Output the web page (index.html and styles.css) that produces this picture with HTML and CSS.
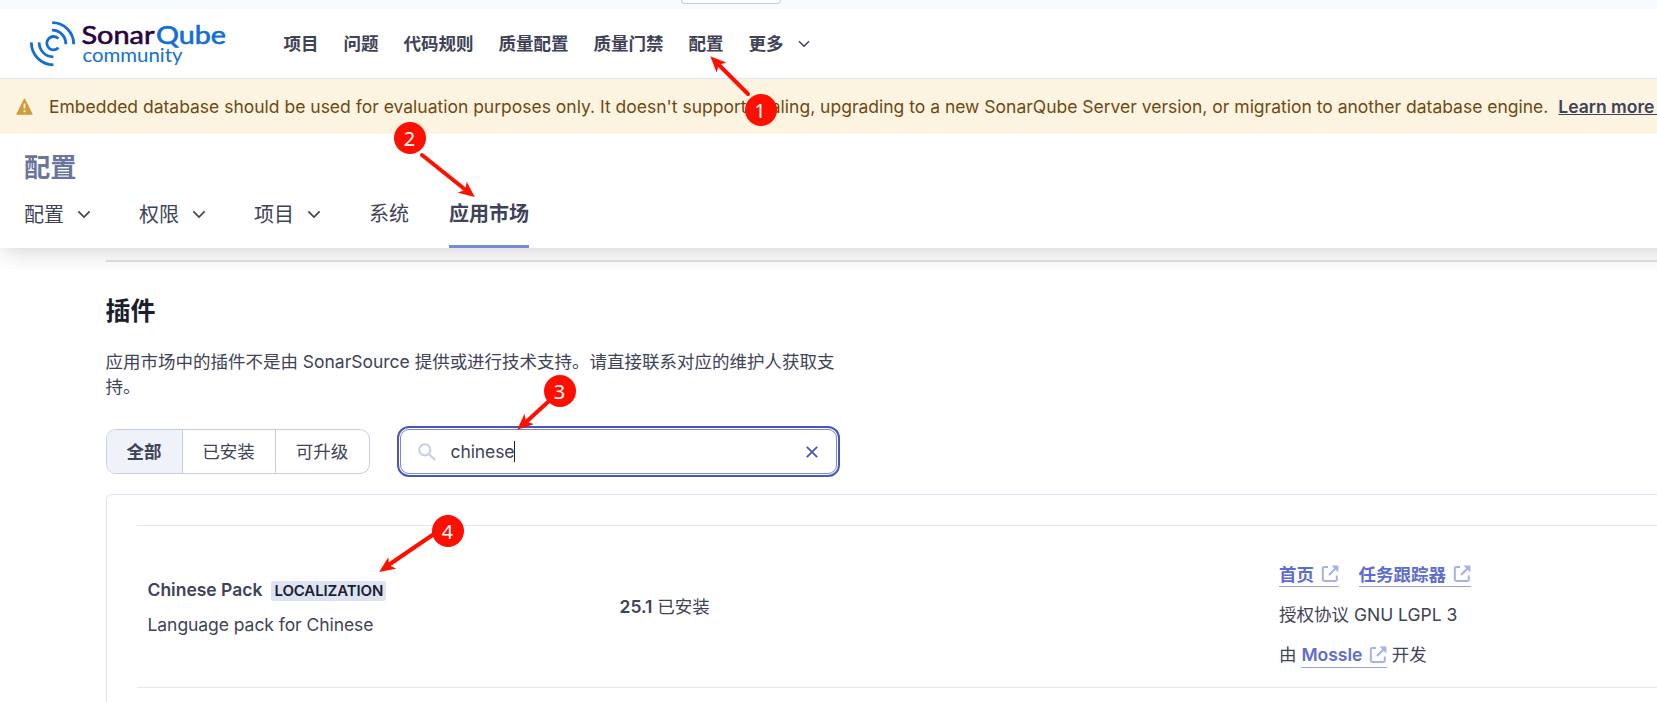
FILE: index.html
```html
<!DOCTYPE html>
<html lang="zh-CN">
<head>
<meta charset="utf-8">
<title>SonarQube</title>
<link rel="stylesheet" href="styles.css">
</head>
<body>
<svg class="defs" width="0" height="0">
  <symbol id="chev" viewBox="0 0 12 8"><path d="M1 1.2 6 6.2 11 1.2" fill="none" stroke="currentColor" stroke-width="1.5"/></symbol>
  <symbol id="ext" viewBox="0 0 18 18"><path d="M7 2H3.2Q1.8 2 1.8 3.4V14.6Q1.8 16 3.2 16H14.4Q15.8 16 15.8 14.6V10.5" fill="none" stroke="currentColor" stroke-width="2"/><path d="M8 10 15 3" fill="none" stroke="currentColor" stroke-width="2.2"/><path d="M10.5.6H17.4V7.5Z" fill="currentColor"/></symbol>
</svg>
<div class="page">
  <div class="strip"><div class="pill"></div></div>
  <header class="top">
    <svg class="logo" width="200" height="48" viewBox="0 0 200 48">
      <g fill="none" stroke="#126ed3" stroke-width="2.8">
        <path d="M22.2 1.6A21.5 21.5 0 0 1 43.7 23.2"/>
        <path d="M22 9.2A13.6 13.6 0 0 1 35.8 23.2"/>
        <path d="M28.4 17.6A6.7 6.7 0 1 0 28.4 26.8"/>
        <path d="M1.4 21.4A22 22 0 0 0 23.4 43.8"/>
        <path d="M9.2 21.4A14 14 0 0 0 23.4 35.8"/>
      </g>
      <text class="brand" x="51.5" y="23" textLength="73" lengthAdjust="spacingAndGlyphs" fill="#290042">Sonar</text>
      <text class="brand" x="126" y="23" textLength="70" lengthAdjust="spacingAndGlyphs" fill="#126ed3">Qube</text>
      <text class="edition" x="52.5" y="40.5" textLength="100" lengthAdjust="spacingAndGlyphs" fill="#126ed3">community</text>
    </svg>
    <nav class="main-nav">
      <span>项目</span><span>问题</span><span>代码规则</span><span>质量配置</span><span>质量门禁</span><span>配置</span><span>更多</span>
      <svg class="more" width="12" height="8"><use href="#chev"/></svg>
    </nav>
  </header>
  <div class="banner">
    <svg width="17" height="17" viewBox="0 0 17 17"><path d="M8.5.8 16.2 16.2H.8Z" fill="#d39a36" stroke="#d39a36" stroke-linejoin="round"/><path d="M8.5 5.5v5M8.5 12.2v2" stroke="#fcf3e1" stroke-width="1.8"/></svg>
    <span class="msg">Embedded database should be used for evaluation purposes only. It doesn't support scaling, upgrading to a new SonarQube Server version, or migration to another database engine.</span>
    <a class="learn">Learn more&nbsp;</a>
  </div>
  <section class="sub">
    <h1>配置</h1>
    <nav class="tabs">
      <span class="drop">配置<svg width="14" height="9"><use href="#chev"/></svg></span>
      <span class="drop">权限<svg width="14" height="9"><use href="#chev"/></svg></span>
      <span class="drop">项目<svg width="14" height="9"><use href="#chev"/></svg></span>
      <span>系统</span>
      <span class="active">应用市场</span>
    </nav>
  </section>
  <main>
    <div class="rule"></div>
    <h2>插件</h2>
    <p class="intro">应用市场中的插件不是由 SonarSource 提供或进行技术支持。请直接联系对应的维护人获取支持。</p>
    <div class="filters">
      <div class="toggle"><span class="on">全部</span><span>已安装</span><span>可升级</span></div>
      <div class="search"><div class="field">
        <svg width="18" height="18" viewBox="0 0 18 18"><g fill="none" stroke="#c5cde3" stroke-width="2"><circle cx="6.8" cy="6.8" r="5.6"/><path d="M11 11 17 17"/></g></svg>
        <span class="query">chinese</span><i class="caret"></i>
        <svg class="clear" width="12" height="12" viewBox="0 0 12 12"><path d="M.8.8 11.2 11.2M11.2.8.8 11.2" stroke="#4b56bb" stroke-width="1.8"/></svg>
      </div></div>
    </div>
    <div class="card">
      <div class="row">
        <div class="name">
          <div><b>Chinese Pack</b><span class="badge">LOCALIZATION</span></div>
          <div class="desc">Language pack for Chinese</div>
        </div>
        <div class="version"><b>25.1</b> 已安装</div>
        <div class="links">
          <div class="pair"><a>首页<svg width="18" height="18"><use href="#ext"/></svg></a><a>任务跟踪器<svg width="18" height="18"><use href="#ext"/></svg></a></div>
          <div>授权协议 GNU LGPL 3</div>
          <div>由 <a>Mossle<svg width="18" height="18"><use href="#ext"/></svg></a> 开发</div>
        </div>
      </div>
    </div>
  </main>
  <svg class="marks" width="1657" height="702" viewBox="0 0 1657 702">
    <defs><marker id="tip" viewBox="0 0 16 14" refX="15" refY="7" markerWidth="16" markerHeight="14" markerUnits="userSpaceOnUse" orient="auto"><path d="M16 7 0 0 4 7 0 14Z" fill="#ff0f00"/></marker></defs>
    <g stroke="#ff0f00" stroke-width="4" stroke-linecap="round">
      <path d="M748 94 718 64"/><path d="M422 155 467 191"/><path d="M549 401 525 423"/><path d="M434 534 387 566"/>
    </g>
    <g stroke="none" fill="none">
      <path d="M748 94 711 57" marker-end="url(#tip)"/><path d="M422 155 474 196.500" marker-end="url(#tip)"/><path d="M549 401 518 429" marker-end="url(#tip)"/><path d="M434 534 380 571.500" marker-end="url(#tip)"/>
    </g>
    <g fill="#ff0f00"><circle cx="761" cy="110" r="16"/><circle cx="410" cy="138" r="16"/><circle cx="560" cy="391" r="16"/><circle cx="448" cy="531" r="16"/></g>
    <g class="num"><text x="760" y="118">1</text><text x="409.500" y="146">2</text><text x="559.500" y="399">3</text><text x="447.500" y="539">4</text></g>
  </svg>
</div>
</body>
</html>
```
FILE: styles.css
```css
* { box-sizing: border-box; }
body { margin: 0; font: 17.5px/25px Inter, "Noto Sans CJK SC", sans-serif; color: #3e4357; background: #fff; }
.defs { position: absolute; }
.page { position: relative; width: 1657px; height: 702px; overflow: hidden; }
.strip { height: 9px; background: #f5fbff; overflow: hidden; }
.pill { width: 100px; height: 4px; margin-left: 681px; border: 1px solid #c5cbe0; border-top: 0; border-radius: 0 0 10px 10px; background: #fff; }
.top { height: 70px; display: flex; border-bottom: 1px solid #dde3f2; padding-left: 30px; }
.logo { margin-top: 12px; flex: none; }
.brand { font: 400 24.5px Lato, sans-serif; stroke-width: .6px; }
.brand:nth-of-type(1) { stroke: #290042; }
.brand:nth-of-type(2) { stroke: #126ed3; }
.edition { font: 400 18.5px Lato, sans-serif; }
.main-nav { display: flex; gap: 25px; margin: 22px 0 0 53.5px; font-weight: 600; }
.more { margin: 9px 0 0 -11px; }
.banner { position: relative; z-index: 1; height: 55px; background: #fcf3e1; display: flex; align-items: center; padding-left: 16px; color: #6e4a12; white-space: nowrap; }
.banner > * { flex: none; }
.msg { margin-left: 16px; letter-spacing: -.005px; }
.learn { margin-left: 10px; font-weight: 600; color: #3e4357; text-decoration: underline; }
.sub { position: relative; width: 1720px; height: 114px; background: #fff; padding: 18px 24px 0; box-shadow: 4px 5px 20px rgba(30, 35, 50, .18); }
.sub h1 { margin: 0; font-size: 26.25px; line-height: 32px; font-weight: 600; color: #69759b; }
.tabs { display: flex; gap: 40px; margin-top: 15px; font-size: 20px; line-height: 30px; height: 49px; }
.drop { width: 75px; display: flex; align-items: center; gap: 13px; height: 31px; }
.drop svg { margin-top: -1px; }
.active { font-weight: 600; border-bottom: 3px solid #7b87d9; }
main { padding-left: 105.5px; }
.rule { height: 2px; margin-top: 12px; background: #e1e1e3; }
h2 { margin: 34px 0 0; font-size: 25px; line-height: 30px; font-weight: 600; color: #1b1e2e; }
.intro { margin: 23px 0 0; width: 738px; letter-spacing: -.01px; }
.filters { display: flex; align-items: center; margin-top: 27px; gap: 27px; height: 51px; }
.toggle { display: flex; height: 45px; border: 1px solid #c5cde3; border-radius: 10px; overflow: hidden; line-height: 43px; text-align: center; }
.toggle span { width: 93px; border-right: 1px solid #c5cde3; }
.toggle span:first-child { width: 76px; }
.toggle span:last-child { border-right: 0; }
.toggle .on { background: #eff2f9; font-weight: 600; }
.search { width: 443px; height: 51px; border: 2px solid #4b56bb; border-radius: 12px; padding: 1px; }
.field { height: 100%; border: 1px solid #7b87d9; border-radius: 9px; display: flex; align-items: center; padding: 0 18px 0 17px; }
.query { margin-left: 15px; letter-spacing: -.1px; }
.caret { width: 1px; height: 21px; background: #222; }
.clear { margin-left: auto; }
.card { margin-top: 17px; height: 220px; border: 1px solid #dde3f2; border-right: 0; border-radius: 6px 0 0 0; padding: 30px 0 0 30px; }
.row { height: 163px; border-top: 1px solid #e6e7ea; border-bottom: 1px solid #e6e7ea; display: flex; align-items: center; padding-left: 11px; }
.row b { font-weight: 600; }
.name { width: 472px; }
.badge { display: inline-block; margin-left: 9px; padding: 0 3px; background: #dde3f2; border-radius: 3px; color: #1b1e2e; font-weight: 600; font-size: 15px; line-height: 20px; letter-spacing: -.12px; }
.desc { margin-top: 10px; letter-spacing: -.06px; }
.version { width: 659.5px; }
.links { display: flex; flex-direction: column; gap: 15px; padding-top: 17px; }
.pair { display: flex; gap: 20px; }
.links a { display: inline-flex; align-items: center; gap: 6.5px; height: 25px; font-weight: 600; color: #5d6cd0; border-bottom: 1px solid #99a4ea; }
.links a svg { color: #a6b0ee; }
.marks { position: absolute; left: 0; top: 0; z-index: 2; }
.num { font: 20px "Noto Sans", sans-serif; fill: #fff; text-anchor: middle; }
```
